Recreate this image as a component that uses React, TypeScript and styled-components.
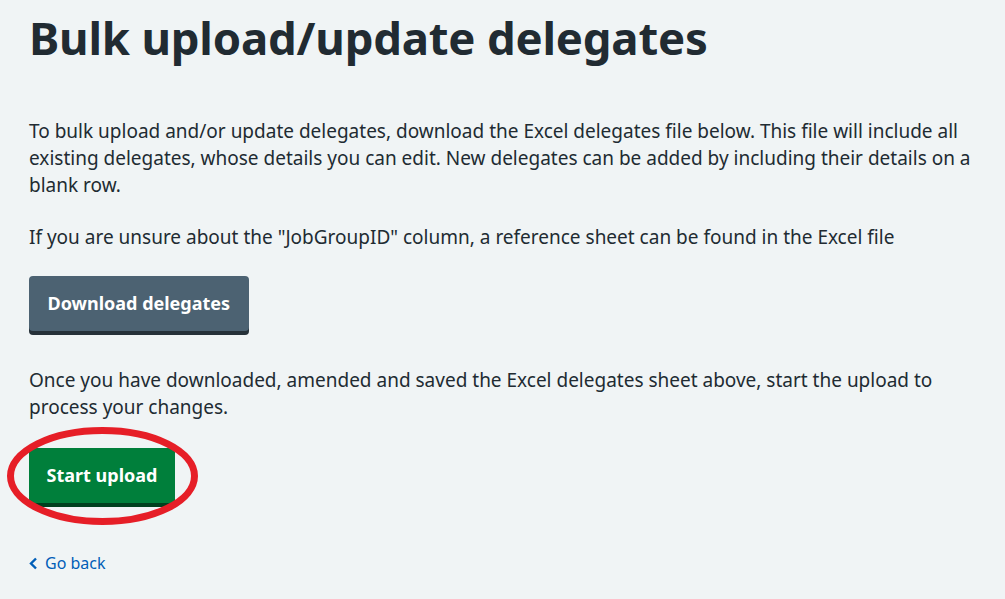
import React from "react";
import styled, { createGlobalStyle } from "styled-components";

const Global = createGlobalStyle`
  html, body { margin: 0; padding: 0; background: #f0f4f5; }
  body { font-family: "Noto Sans", "Liberation Sans", sans-serif; color: #212b32; }
`;

const Page = styled.main`
  padding: 9px 20px 0 29px;
  max-width: 960px;
`;

const Heading = styled.h1`
  font-size: 45.5px;
  line-height: 56px;
  font-weight: 700;
  margin: 0 0 53px;
  letter-spacing: -0.2px;
`;

const Para = styled.p`
  font-size: 19px;
  line-height: 27px;
  margin: 0 0 25px;
`;

const Button = styled.button<{ $variant: "secondary" | "primary" }>`
  display: block;
  font-family: inherit;
  font-size: 18px;
  font-weight: 700;
  line-height: 27px;
  color: #fff;
  border: none;
  border-radius: 4px;
  padding: 14px ${(p) => (p.$variant === "primary" ? "17.5px" : "18.5px")};
  cursor: pointer;
  background: ${(p) => (p.$variant === "primary" ? "#007f3b" : "#4c6272")};
  box-shadow: 0 4px 0 ${(p) => (p.$variant === "primary" ? "#00401e" : "#263139")};
  margin: 0 0 36px;
`;

const Annotated = styled.div`
  position: relative;
  display: inline-block;
  margin-top: 2px;
`;

const Ellipse = styled.svg`
  position: absolute;
  left: -22px;
  top: -21px;
  width: 191px;
  height: 98px;
  pointer-events: none;
  overflow: visible;
`;

const BackRow = styled.div`
  margin-top: 12px;
`;

const BackLink = styled.a`
  display: inline-flex;
  align-items: center;
  gap: 7px;
  font-size: 16px;
  line-height: 24px;
  color: #005eb8;
  text-decoration: none;
`;

export default function App() {
  return (
    <>
      <Global />
      <Page>
        <Heading>Bulk upload/update delegates</Heading>
        <Para>
          To bulk upload and/or update delegates, download the Excel delegates file below. This file will include all
          existing delegates, whose details you can edit. New delegates can be added by including their details on a
          blank row.
        </Para>
        <Para>If you are unsure about the "JobGroupID" column, a reference sheet can be found in the Excel file</Para>
        <Button $variant="secondary">Download delegates</Button>
        <Para>
          Once you have downloaded, amended and saved the Excel delegates sheet above, start the upload to process your
          changes.
        </Para>
        <Annotated>
          <Button $variant="primary">Start upload</Button>
          <Ellipse viewBox="0 0 191 98">
            <ellipse cx="95.5" cy="49" rx="92" ry="45.5" fill="none" stroke="#e61e27" strokeWidth="7" />
          </Ellipse>
        </Annotated>
        <BackRow>
          <BackLink href="#">
            <svg width="9" height="13" viewBox="0 0 9 13">
              <path d="M7 1.5 L2 6.5 L7 11.5" fill="none" stroke="#005eb8" strokeWidth="2.4" />
            </svg>
            Go back
          </BackLink>
        </BackRow>
      </Page>
    </>
  );
}
